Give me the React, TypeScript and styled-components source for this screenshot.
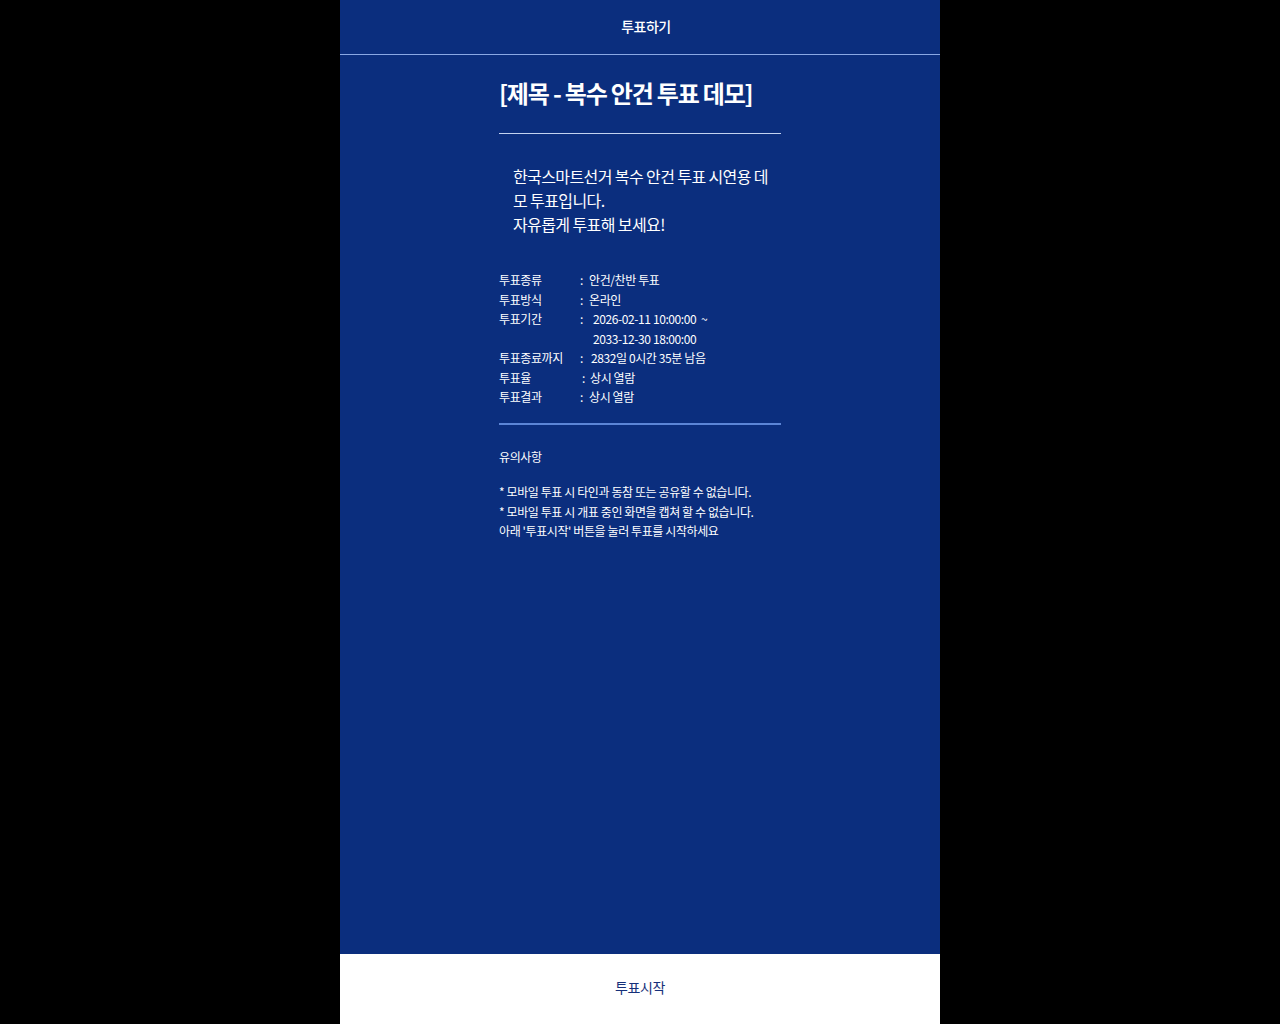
import styled, { createGlobalStyle } from 'styled-components';

const GlobalStyle = createGlobalStyle`
  html, body {
    margin: 0;
    padding: 0;
    background: #000;
  }
  body {
    font-family: "Noto Sans CJK KR", "Noto Sans", sans-serif;
  }
`;

const Page = styled.div`
  width: 600px;
  height: 1024px;
  margin: 0 auto;
  display: flex;
  flex-direction: column;
  background: #0b2e7e;
  color: #fff;
`;

const Header = styled.header`
  height: 55px;
  box-sizing: border-box;
  display: flex;
  align-items: center;
  justify-content: center;
  padding: 0 0 3px 12px;
  border-bottom: 1px solid #8aa8e4;
  font-size: 14px;
  font-weight: 500;
  letter-spacing: -0.5px;
`;

const Content = styled.main`
  flex: 1;
  width: 282px;
  margin: 0 auto;
  padding-top: 20px;
`;

const Title = styled.h1`
  margin: 0;
  font-size: 24px;
  font-weight: 700;
  letter-spacing: -1.2px;
  line-height: 36px;
  padding-bottom: 22px;
  border-bottom: 1px solid #c3d2f0;
`;

const Description = styled.p`
  margin: 0;
  padding: 30px 0 0 14px;
  font-size: 16px;
  line-height: 24px;
  letter-spacing: -0.6px;
  word-break: break-all;
`;

const InfoList = styled.dl`
  margin: 34px 0 0;
  padding-bottom: 16px;
  border-bottom: 2px solid #5c85d6;
  font-size: 12px;
  line-height: 19.5px;
  letter-spacing: -0.4px;
`;

const InfoRow = styled.div`
  display: flex;
`;

const Label = styled.dt<{ $width: number }>`
  width: ${p => p.$width}px;
  flex: none;
`;

const Value = styled.dd<{ $gap: number }>`
  margin: 0;
  display: flex;
  white-space: pre;
  &::before {
    content: ':';
    width: ${p => p.$gap}px;
    flex: none;
  }
`;

const Notes = styled.section`
  padding-top: 22px;
  font-size: 12px;
  line-height: 19.5px;
  letter-spacing: -0.4px;
`;

const NoteTitle = styled.div`
  margin-bottom: 16px;
`;

const StartButton = styled.button`
  height: 70px;
  border: none;
  padding: 0 0 4px;
  background: #fff;
  color: #16307a;
  font-family: inherit;
  font-size: 14px;
  letter-spacing: -0.4px;
  cursor: pointer;
`;

const info = [
  { label: '투표종류', value: ['안건/찬반 투표'], gap: 9, width: 81 },
  { label: '투표방식', value: ['온라인'], gap: 9, width: 81 },
  { label: '투표기간', value: ['2026-02-11 10:00:00  ~', '2033-12-30 18:00:00'], gap: 13, width: 81 },
  { label: '투표종료까지', value: ['2832일 0시간 35분 남음'], gap: 11, width: 81 },
  { label: '투표율', value: ['상시 열람'], gap: 8, width: 83 },
  { label: '투표결과', value: ['상시 열람'], gap: 9, width: 81 },
];

export default function App() {
  return (
    <>
      <GlobalStyle />
      <Page>
        <Header>투표하기</Header>
        <Content>
          <Title>[제목 - 복수 안건 투표 데모]</Title>
          <Description>
            한국스마트선거 복수 안건 투표 시연용 데모 투표입니다.
            <br />
            자유롭게 투표해 보세요!
          </Description>
          <InfoList>
            {info.map(it => (
              <InfoRow key={it.label}>
                <Label $width={it.width}>{it.label}</Label>
                <Value $gap={it.gap}>
                  <span>
                    {it.value.map((v, i) => <div key={i}>{v}</div>)}
                  </span>
                </Value>
              </InfoRow>
            ))}
          </InfoList>
          <Notes>
            <NoteTitle>유의사항</NoteTitle>
            <div>* 모바일 투표 시 타인과 동참 또는 공유할 수 없습니다.</div>
            <div>* 모바일 투표 시 개표 중인 화면을 캡쳐 할 수 없습니다.</div>
            <div>아래 '투표시작' 버튼을 눌러 투표를 시작하세요</div>
          </Notes>
        </Content>
        <StartButton>투표시작</StartButton>
      </Page>
    </>
  );
}
